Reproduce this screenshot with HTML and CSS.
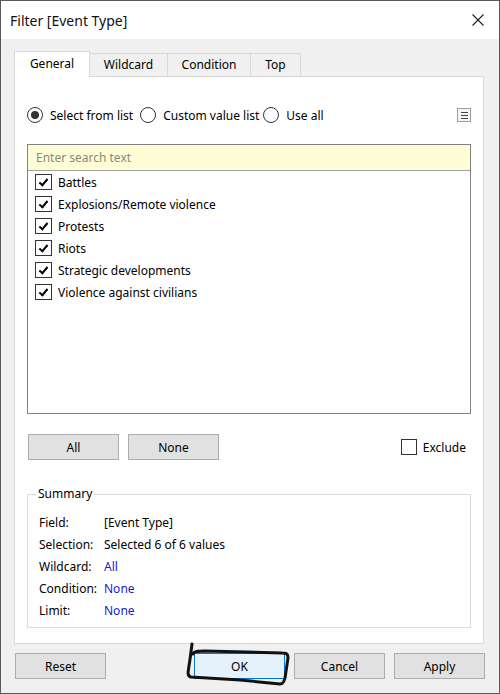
FILE: index.html
```html
<!DOCTYPE html>
<html>
<head>
<meta charset="utf-8">
<link rel="stylesheet" href="styles.css">
</head>
<body>
<div class="window">
  <div class="titlebar">
    <span class="title">Filter [Event Type]</span>
    <svg class="close" width="12" height="12" viewBox="0 0 12 12"><path d="M0.5 0.5 L11.5 11.5 M11.5 0.5 L0.5 11.5" stroke="#222" stroke-width="1.1" fill="none"/></svg>
  </div>
  <div class="body">
    <div class="tabs">
      <div class="tab tab-general active">General</div>
      <div class="tab tab-wildcard">Wildcard</div>
      <div class="tab tab-condition">Condition</div>
      <div class="tab tab-top">Top</div>
    </div>
    <div class="panel">
      <div class="radio-row">
        <label class="opt"><span class="radio checked"></span>Select from list</label>
        <label class="opt"><span class="radio"></span>Custom value list</label>
        <label class="opt"><span class="radio"></span>Use all</label>
        <span class="menu-btn"><span></span><span></span><span></span></span>
      </div>
      <div class="listbox">
        <div class="search">Enter search text</div>
        <ul class="items">
          <li><span class="cb on"></span>Battles</li>
          <li><span class="cb on"></span>Explosions/Remote violence</li>
          <li><span class="cb on"></span>Protests</li>
          <li><span class="cb on"></span>Riots</li>
          <li><span class="cb on"></span>Strategic developments</li>
          <li><span class="cb on"></span>Violence against civilians</li>
        </ul>
      </div>
      <div class="btn-row">
        <button class="btn">All</button>
        <button class="btn">None</button>
        <label class="exclude"><span class="cb"></span>Exclude</label>
      </div>
      <fieldset class="summary">
        <legend>Summary</legend>
        <div class="grid">
          <span>Field:</span><span>[Event Type]</span>
          <span>Selection:</span><span>Selected 6 of 6 values</span>
          <span>Wildcard:</span><span class="link">All</span>
          <span>Condition:</span><span class="link">None</span>
          <span>Limit:</span><span class="link">None</span>
        </div>
      </fieldset>
    </div>
    <div class="footer">
      <button class="btn">Reset</button>
      <div class="right-btns">
        <button class="btn ok">OK</button>
        <button class="btn">Cancel</button>
        <button class="btn">Apply</button>
      </div>
    </div>
  </div>
  <svg class="scribble" width="120" height="56" viewBox="178 638 120 56">
    <path d="M192 644 C191 652 190 660 189 666 C188 672 187 676 191 677 L240 680 L280 684 C283 684 284 682 285 678 L288 658 C288 654 287 653 282 653 L205 651 C198 651 194 651 193 654" fill="none" stroke="#111" stroke-width="3" stroke-linecap="round" stroke-linejoin="round"/>
  </svg>
</div>
</body>
</html>
```

FILE: styles.css
```css
* { box-sizing: border-box; }
html, body { margin: 0; padding: 0; }
body {
  font-family: "Noto Sans", "Open Sans", sans-serif;
  font-size: 12px;
  color: #000;
  background: #fff;
}
.window {
  position: relative;
  width: 500px;
  height: 694px;
  border: 1px solid #5a5a5a;
  background: #f0f0f0;
  display: flex;
  flex-direction: column;
}
.titlebar {
  height: 38px;
  flex: none;
  background: #fff;
  display: flex;
  align-items: center;
  padding: 0 15px 0 9px;
}
.title {
  font-size: 14px;
  color: #111;
}
.close { margin-left: auto; }
.body {
  flex: 1;
  padding: 12px 15px 0 13px;
  display: flex;
  flex-direction: column;
}
.tabs {
  display: flex;
  align-items: flex-end;
  height: 25px;
  position: relative;
  z-index: 2;
}
.tab {
  height: 23px;
  border: 1px solid #d9d9d9;
  border-bottom: none;
  background: #f0f0f0;
  display: flex;
  align-items: center;
  justify-content: center;
  margin-left: -1px;
  padding-bottom: 1px;
}
.tab.active {
  height: 26px;
  margin-bottom: -1px;
  background: #fff;
  margin-left: 0;
  position: relative;
  z-index: 3;
  padding-bottom: 2px;
}
.tab-general { width: 76px; }
.tab-wildcard { width: 79px; }
.tab-condition { width: 84px; }
.tab-top { width: 51px; }
.panel {
  height: 568px;
  flex: none;
  background: #fff;
  border: 1px solid #d9d9d9;
  padding: 30px 12px 0 12px;
  display: flex;
  flex-direction: column;
}
.radio-row {
  height: 16px;
  display: flex;
  align-items: center;
}
.opt {
  display: flex;
  align-items: center;
  gap: 7px;
  white-space: nowrap;
}
.opt:first-child { margin-right: 7px; }
.opt:nth-child(2) { margin-right: 4px; }
.radio {
  width: 16px;
  height: 16px;
  border-radius: 50%;
  border: 1px solid #333;
  background: #fff;
  display: inline-flex;
  align-items: center;
  justify-content: center;
  flex: none;
}
.radio.checked::after {
  content: "";
  width: 8px;
  height: 8px;
  border-radius: 50%;
  background: #333;
}
.menu-btn {
  margin-left: auto;
  width: 14px;
  height: 14px;
  border: 1px solid #a0a0a0;
  background: #f4f4f4;
  display: flex;
  flex-direction: column;
  align-items: center;
  justify-content: center;
  gap: 2px;
}
.menu-btn span {
  width: 7px;
  height: 1px;
  background: #444;
}
.listbox {
  margin-top: 21px;
  height: 270px;
  border: 1px solid #828282;
  flex: none;
}
.search {
  height: 26px;
  background: #fffdd6;
  border-bottom: 1px solid #a0a0a0;
  color: #8a8a7a;
  padding-left: 8px;
  display: flex;
  align-items: center;
}
.items {
  list-style: none;
  margin: 0;
  padding: 0 0 0 7px;
}
.items li {
  height: 22px;
  display: flex;
  align-items: center;
  gap: 6px;
}
.cb {
  width: 17px;
  height: 16px;
  border: 1px solid #333;
  background: #fff;
  flex: none;
  position: relative;
}
.cb.on::after {
  content: "";
  position: absolute;
  left: 5px;
  top: 2px;
  width: 3px;
  height: 7px;
  border: solid #000;
  border-width: 0 2px 2px 0;
  transform: rotate(40deg);
}
.btn-row {
  margin-top: 20px;
  display: flex;
  align-items: center;
  height: 26px;
  padding-left: 1px;
  gap: 9px;
}
.btn {
  width: 91px;
  height: 26px;
  border: 1px solid #adadad;
  background: #e1e1e1;
  font-family: inherit;
  font-size: 12px;
  color: #000;
  padding: 0;
}
.exclude {
  margin-left: auto;
  display: flex;
  align-items: center;
  gap: 6px;
  padding-right: 5px;
}
.exclude .cb { width: 16px; }
.summary {
  margin: 26px 0 0 0;
  padding: 0 8px 6px 8px;
  border: 1px solid #dcdcdc;
  min-width: 0;
}
.summary legend {
  padding: 0 2px;
  line-height: 16px;
  margin-top: 1px;
}
.grid {
  display: grid;
  grid-template-columns: 65px 1fr;
  grid-auto-rows: 22px;
  align-items: center;
  margin-left: 3px;
  margin-top: 9px;
}
.link { color: #1a1acc; }
.footer {
  margin-top: 9px;
  display: flex;
  padding-left: 1px;
}
.right-btns {
  margin-left: auto;
  margin-right: -1px;
  display: flex;
  gap: 9px;
}
.btn.ok {
  background: #e5f1fb;
  border-color: #0078d7;
}
.scribble {
  position: absolute;
  left: 177px;
  top: 637px;
}
```
